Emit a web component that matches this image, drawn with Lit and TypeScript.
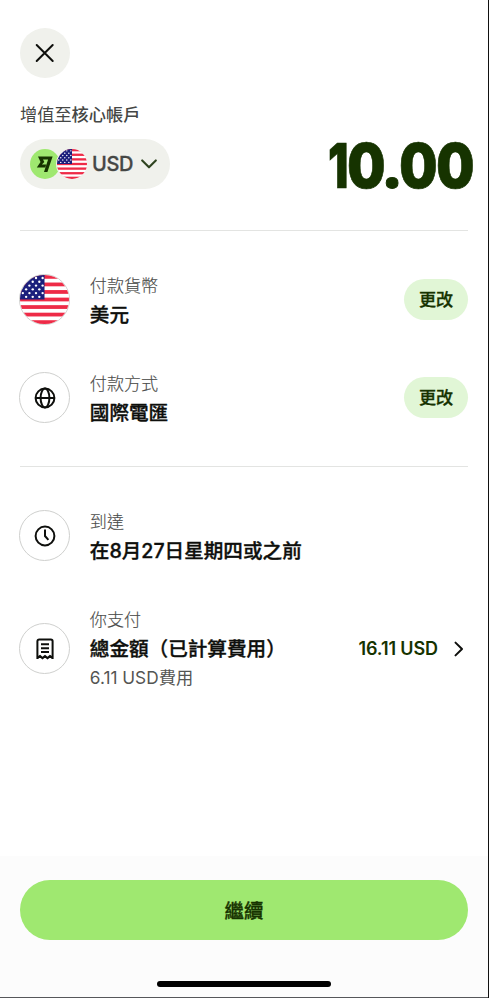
import { LitElement, html, svg, css, nothing, type TemplateResult } from "lit";
import { customElement, property } from "lit/decorators.js";

const font = css`Inter, "Noto Sans CJK TC", sans-serif`;

@customElement("us-flag")
export class UsFlag extends LitElement {
  static styles = css`
    :host { display: block; border-radius: 50%; overflow: hidden; box-sizing: border-box; }
    svg { display: block; width: 100%; height: 100%; }
  `;
  render() {
    const stripes = [0, 2, 4, 6, 8, 10, 12].map(
      (i) => svg`<rect x="0" y=${(i * 52) / 13} width="52" height="4" fill="#ee2b47"/>`
    );
    const stars: TemplateResult[] = [];
    for (let r = 0; r < 6; r++) {
      for (let c = 0; c < 4; c++) {
        const x = 3 + c * 7 + (r % 2 ? 3.5 : 0);
        if (x < 25.5) stars.push(svg`<circle cx=${x} cy=${3.2 + r * 4} r="1.25" fill="#fff"/>` as unknown as TemplateResult);
      }
    }
    return html`<svg viewBox="0 0 52 52">
      <rect width="52" height="52" fill="#fff"/>${stripes}
      <rect width="26" height="26" fill="#1b1f7c"/>${stars}
    </svg>`;
  }
}

@customElement("detail-row")
export class DetailRow extends LitElement {
  @property() label = "";
  @property() heading = "";
  @property() note = "";
  static styles = css`
    :host { display: flex; align-items: center; font-family: ${font}; }
    .icon { flex: none; width: 51px; height: 51px; display: grid; place-items: center; border-radius: 50%; box-sizing: border-box; border: 1px solid #cfd0ce; margin: 0 19.4px 1px -0.6px; }
    .text { flex: 1; min-width: 0; white-space: nowrap; }
    .label { font-size: 17.1px; line-height: 29px; color: #4b4c4a; font-weight: 300; -webkit-text-stroke: 0.15px; }
    .heading { font-size: 19.6px; line-height: 29px; padding-top: 1px; margin-bottom: -1px; color: #0e0f0c; font-weight: 500; -webkit-text-stroke: 0.35px; }
    .note { font-size: 17.25px; line-height: 29px; margin-top: -1px; padding-bottom: 1px; color: #545553; }
    ::slotted(svg), ::slotted(us-flag) { display: block; }
  `;
  render() {
    return html`
      <div class="icon"><slot name="icon"></slot></div>
      <div class="text">
        <div class="label">${this.label}</div>
        <div class="heading">${this.heading}</div>
        ${this.note ? html`<div class="note">${this.note}</div>` : nothing}
      </div>
      <slot></slot>
    `;
  }
}

@customElement("app-root")
export class AppRoot extends LitElement {
  static styles = css`
    :host { display: block; font-family: ${font}; color: #0e0f0c; }
    .screen { box-sizing: border-box; width: 489px; height: 998px; background: #fff; border-right: 1px solid #111; display: flex; flex-direction: column; overflow: hidden; }
    .body { flex: 1; padding: 28px 20px 0; }
    button { font: inherit; border: 0; padding: 0; cursor: pointer; }
    .close { width: 50px; height: 50px; border-radius: 50%; background: #f0f1ec; display: grid; place-items: center; }
    .caption { margin-top: 24px; height: 26px; line-height: 26px; font-size: 17.2px; color: #454745; }
    .caption b { font-weight: 500; }
    .entry { margin-top: 11px; height: 50px; display: flex; align-items: center; justify-content: space-between; }
    .chip { height: 50px; width: 150px; border-radius: 25px; background: #f0f1ec; display: flex; align-items: center; padding-left: 10px; box-sizing: border-box; color: #454745; }
    .brand { display: block; }
    .chip us-flag { width: 30px; height: 30px; margin-left: -3px; box-shadow: 0 0 0 1px #f0f1ec; }
    .code { font-size: 20px; font-weight: 500; margin: 0 8px 0 5px; letter-spacing: -0.4px; -webkit-text-stroke: 0.3px; }
    .amount { display: flex; align-items: baseline; font-weight: 900; font-size: 62.5px; line-height: 50px; color: #163300; margin-right: -5.5px; padding-top: 2px; }
    .amount span { display: flex; justify-content: center; width: 36.8px; transform: scaleX(0.86); -webkit-text-stroke: 0.7px; }
    .amount .one { width: 18.5px; transform: scaleX(0.72); }
    .amount .dot { width: 15.5px; font-family: "Open Sans", sans-serif; font-weight: 800; font-size: 58px; transform: none; -webkit-text-stroke: 1px; }
    .rule { height: 1px; background: #e3e4e2; width: 448px; }
    .first { margin-top: 41px; }
    .second { margin-top: 39px; }
    .pay, .method, .arrive, .total { margin-top: 40px; }
    us-flag.big { width: 49px; height: 49px; }
    .change { width: 64px; height: 41px; border-radius: 21px; background: #e1f6d6; color: #163300; font-size: 17.1px; font-weight: 500; -webkit-text-stroke: 0.3px; line-height: 40px; padding-top: 1px; margin-bottom: 2px; }
    .sum { display: flex; align-items: center; font-size: 18px; font-weight: 600; color: #163300; letter-spacing: -0.1px; margin-bottom: 1px; }
    .sum svg { margin-left: 15px; margin-right: 3px; }
    .footer { height: 142px; box-sizing: border-box; padding: 24px 20px 0; background: #fcfcfc; border-bottom: 1px solid #56575a; display: flex; flex-direction: column; }
    .go { width: 448px; height: 60px; border-radius: 30px; background: #9fe870; color: #163300; font-size: 19.4px; line-height: 58px; padding-top: 2px; font-weight: 500; -webkit-text-stroke: 0.35px; }
    .home { margin: 41px 0 0 137px; width: 174px; height: 6px; border-radius: 3px; background: #000; }
  `;

  render() {
    return html`
      <div class="screen">
        <main class="body">
          <button class="close" aria-label="關閉">
            <svg width="20" height="20" viewBox="0 0 20 20" fill="none" stroke="#0e0f0c" stroke-width="2" stroke-linecap="round"><path d="M1.7 2l16 16M17.7 2L1.7 18"/></svg>
          </button>
          <div class="caption">增值至<b>核心帳戶</b></div>
          <div class="entry">
            <button class="chip">
              <svg class="brand" width="30" height="30" viewBox="0 0 30 30">
                <circle cx="15" cy="15" r="15" fill="#9fe870"/>
                <path d="M8 7.5H22.6L17.4 22.9H14L18.1 10.6H13L14.3 13L11.9 15.6H16.2L15.2 18.5H6.8L10.5 12.9Z" fill="#163300"/>
              </svg>
              <us-flag></us-flag>
              <span class="code">USD</span>
              <svg width="16" height="10" viewBox="0 0 16 10" fill="none" stroke="#2f4420" stroke-width="2.1" stroke-linecap="round" stroke-linejoin="round"><path d="M1.2 1.4L8 8.3L14.8 1.4"/></svg>
            </button>
            <div class="amount"><span class="one">1</span><span>0</span><span class="dot">.</span><span>0</span><span>0</span></div>
          </div>
          <div class="rule first"></div>
          <detail-row class="pay" label="付款貨幣" heading="美元">
            <us-flag class="big" slot="icon"></us-flag>
            <button class="change">更改</button>
          </detail-row>
          <detail-row class="method" label="付款方式" heading="國際電匯">
            <svg slot="icon" width="22" height="22" viewBox="0 0 22 22" fill="none" stroke="#0e0f0c" stroke-width="2"><circle cx="11" cy="11" r="9.4"/><ellipse cx="11" cy="11" rx="4.4" ry="9.4"/><path d="M1.4 11H20.6"/></svg>
            <button class="change">更改</button>
          </detail-row>
          <div class="rule second"></div>
          <detail-row class="arrive" label="到達" heading="在8月27日星期四或之前">
            <svg slot="icon" width="22" height="22" viewBox="0 0 22 22" fill="none" stroke="#0e0f0c" stroke-width="2"><circle cx="11" cy="11" r="9.4"/><path d="M11 4.6V11L14.4 14.8"/></svg>
          </detail-row>
          <detail-row class="total" label="你支付" heading="總金額（已計算費用）" note="6.11 USD費用">
            <svg slot="icon" width="20" height="22" viewBox="0 0 20 22" fill="none" stroke="#0e0f0c" stroke-width="2"><path d="M2.4 21V3.2Q2.4 1.4 4.2 1.4H15.8Q17.6 1.4 17.6 3.2V21"/><path d="M2.4 19.8L5 18.2L7.5 20.2L10 18.2L12.5 20.2L15 18.2L17.6 19.8" stroke-width="2.2"/><path d="M6 6.3H14M6 10.2H14M6 14.1H14"/></svg>
            <div class="sum">16.11 USD
              <svg width="12" height="16" viewBox="0 0 12 16" fill="none" stroke="#0e0f0c" stroke-width="2" stroke-linecap="round" stroke-linejoin="round"><path d="M2.5 1.6L9 8L2.5 14.4"/></svg>
            </div>
          </detail-row>
        </main>
        <footer class="footer">
          <button class="go">繼續</button>
          <div class="home"></div>
        </footer>
      </div>
    `;
  }
}
